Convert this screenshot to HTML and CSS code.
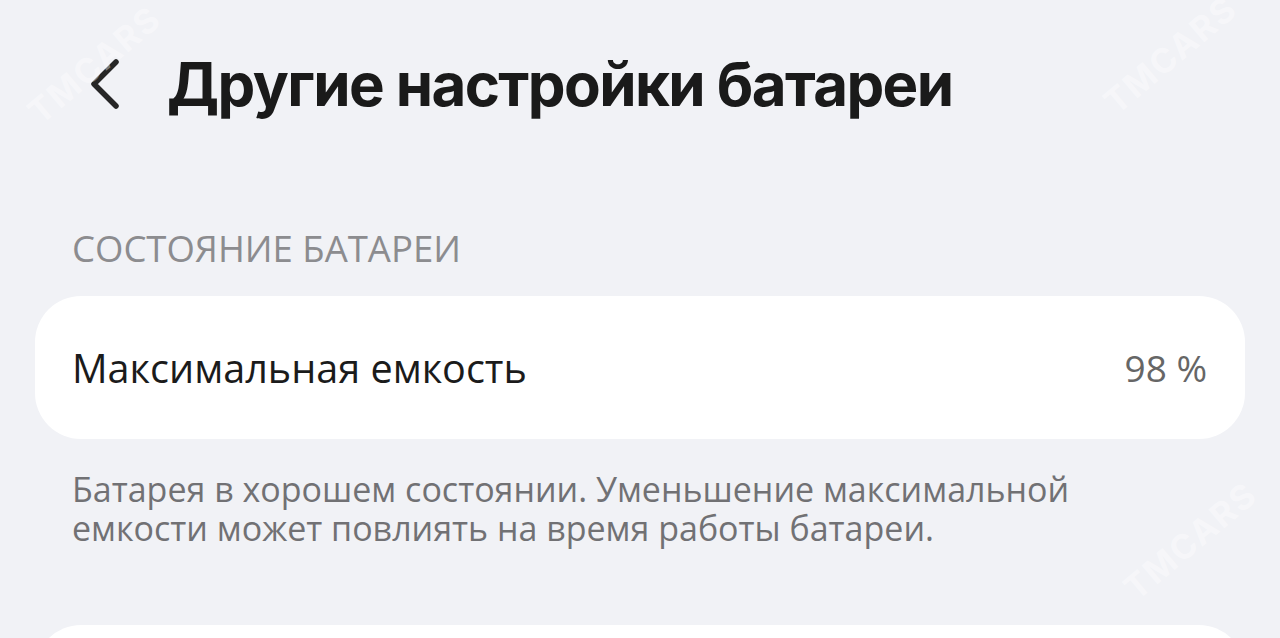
FILE: index.html
```html
<!DOCTYPE html>
<html lang="ru">
<head>
<meta charset="utf-8">
<link rel="stylesheet" href="styles.css">
</head>
<body>
<div class="screen">
  <header class="appbar">
    <svg class="back" width="40" height="56" viewBox="0 0 40 56"><path d="M32 6 L10 28 L32 50" fill="none" stroke="#262626" stroke-width="5.5" stroke-linecap="round" stroke-linejoin="round"/></svg>
    <h1 class="title">Другие настройки батареи</h1>
  </header>
  <section class="group">
    <div class="group-label">СОСТОЯНИЕ БАТАРЕИ</div>
    <div class="card">
      <span class="item-name">Максимальная емкость</span>
      <span class="item-value">98 %</span>
    </div>
    <p class="note">Батарея в хорошем состоянии. Уменьшение максимальной<br>емкости может повлиять на время работы батареи.</p>
  </section>
  <div class="card next"></div>
  <div class="wm wm1">TMCARS</div>
  <div class="wm wm2">TMCARS</div>
  <div class="wm wm3">TMCARS</div>
</div>
</body>
</html>
```
FILE: styles.css
```css
html, body {
  margin: 0;
  padding: 0;
  background: #f1f2f6;
}
.screen {
  width: 1280px;
  height: 638px;
  overflow: hidden;
  position: relative;
  font-family: "Open Sans", "Noto Sans", sans-serif;
}
.appbar {
  display: flex;
  align-items: center;
  height: 100px;
  padding: 34px 0 0 84px;
  box-sizing: content-box;
}
.back {
  flex: none;
}
.title {
  margin: 0 0 0 43px;
  font-family: "Inter", sans-serif;
  font-weight: 700;
  font-size: 60px;
  color: #1a1a1a;
  letter-spacing: -1.6px;
  line-height: 1;
}
.group {
  padding: 0 35px;
}
.group-label {
  margin-top: 92px;
  padding-left: 37px;
  font-size: 36.5px;
  color: #8c8c8f;
  line-height: 44px;
}
.card {
  margin-top: 26px;
  height: 143px;
  background: #fff;
  border-radius: 46px;
  display: flex;
  align-items: center;
  justify-content: space-between;
  padding: 0 38px 0 37px;
}
.item-name {
  font-size: 39.6px;
  color: #1b1b1b;
}
.item-value {
  font-size: 37px;
  color: #666;
}
.note {
  margin: 31px 0 0;
  padding-left: 37px;
  font-size: 34px;
  line-height: 39px;
  color: #717174;
}
.card.next {
  margin: 77px 35px 0;
}
.wm {
  position: absolute;
  font-family: "Inter", sans-serif;
  font-weight: 700;
  font-size: 34px;
  color: rgba(255,255,255,0.4);
  transform: rotate(-40deg);
  letter-spacing: 2px;
}
.wm1 { left: 14px; top: 44px; }
.wm2 { left: 1090px; top: 34px; }
.wm3 { left: 1110px; top: 520px; }
```
